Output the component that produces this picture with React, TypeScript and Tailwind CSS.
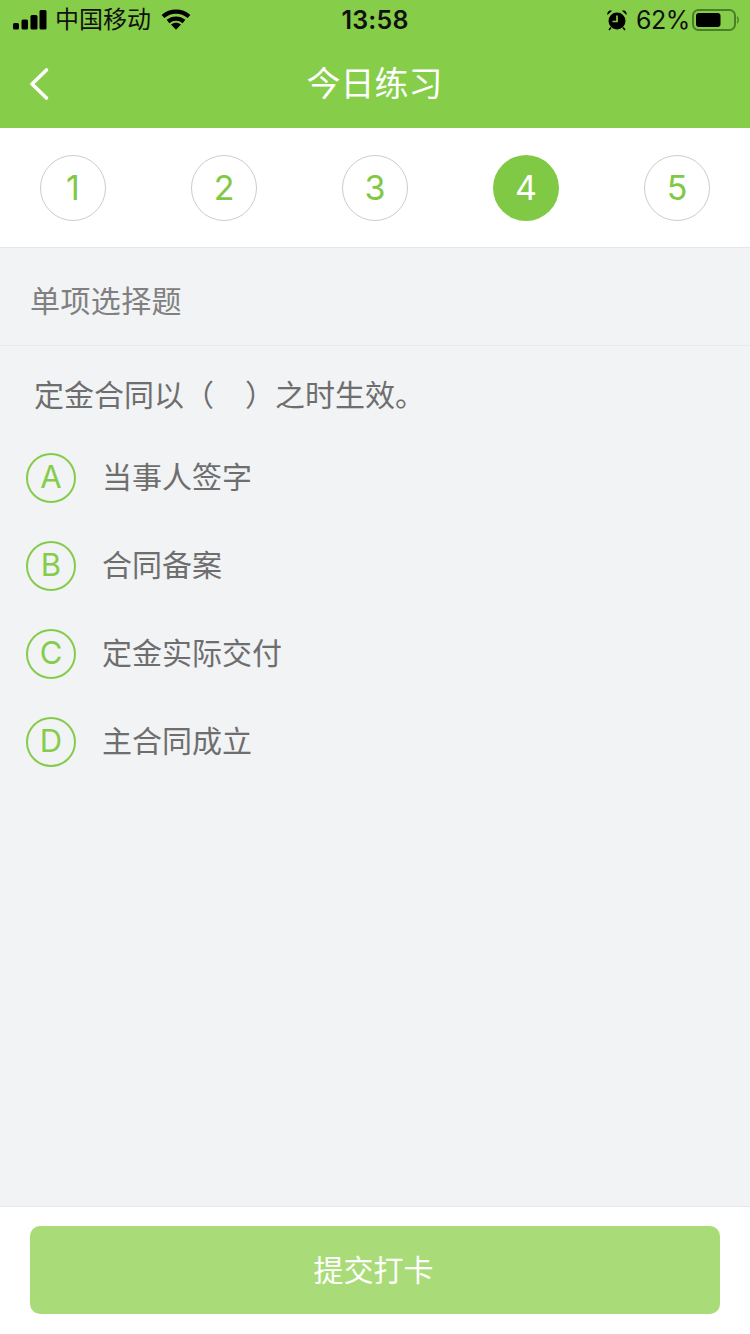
const font = "font-['Liberation_Sans','Noto_Sans_CJK_SC',sans-serif]";

function StatusBar() {
  return (
    <div className="h-10 flex items-center justify-between pl-[13px] pr-[10px] text-black relative">
      <div className="flex items-center">
        <svg width="34" height="20" viewBox="0 0 34 20" fill="#000">
          <rect x="0" y="13" width="6" height="6.500" rx="1.500" />
          <rect x="8.500" y="9.500" width="6.500" height="10" rx="1.500" />
          <rect x="17.500" y="5" width="7" height="14.500" rx="1.500" />
          <rect x="26.500" y="0" width="7" height="19.500" rx="1.500" />
        </svg>
        <span className="ml-2 text-[24px] leading-none text-[#111]">中国移动</span>
        <svg className="ml-[10px]" width="30" height="22" viewBox="0 0 30 22" fill="none" stroke="#000" strokeWidth="4.200">
          <path d="M2 7.500C9.500 .9 20.500 .9 28 7.500" />
          <path d="M7 12.500C11.800 8.600 18.200 8.600 23 12.500" />
          <path d="M10 15.500 15 20.800 20 15.500C17 13.200 13 13.200 10 15.500Z" fill="#000" stroke="none" />
        </svg>
      </div>
      <span className="absolute left-0 right-0 text-center text-[25px] leading-none font-semibold font-['Inter'] text-[#111] tracking-[0.2px] pointer-events-none">13:58</span>
      <div className="flex items-center">
        <svg width="22" height="22" viewBox="0 0 22 22" fill="#000">
          <circle cx="11" cy="12" r="8.500" />
          <path d="M1.500 6 6 1.800C3.600.8 .6 2.800 1.500 6ZM20.500 6 16 1.800C18.400.8 21.400 2.800 20.500 6Z" />
          <path d="M11 6.500V12.500H6.500" fill="none" stroke="#86ce4a" strokeWidth="1.700" />
          <path d="M5 18.500 3 21M17 18.500l2 2.500" stroke="#000" strokeWidth="1.600" />
        </svg>
        <span className="ml-[8px] text-[25px] leading-none font-['Inter'] font-normal text-[#111] tracking-[-0.4px]">62%</span>
        <svg className="ml-[2px]" width="48" height="24" viewBox="0 0 48 24">
          <rect x="1" y="2" width="42" height="20" rx="5.500" fill="none" stroke="#4a7f2a" strokeWidth="2" />
          <rect x="4" y="5" width="24.500" height="14" rx="3" fill="#000" />
          <path d="M45 9c1.600.5 1.600 5.500 0 6" fill="none" stroke="#4a7f2a" strokeWidth="1.400" />
        </svg>
      </div>
    </div>
  );
}

function Step({ n, active }: { n: number; active?: boolean }) {
  return (
    <div
      className={
        active
          ? "w-[66px] h-[66px] rounded-full bg-[#7fc944] text-white flex items-center justify-center text-[34px] font-['Inter'] font-normal"
          : "w-[66px] h-[66px] rounded-full border border-[#cccccc] text-[#7fc944] flex items-center justify-center text-[34px] font-['Inter'] font-normal"
      }
    >
      {n}
    </div>
  );
}

function Option({ letter, text }: { letter: string; text: string }) {
  return (
    <div className="h-[88px] flex items-center pl-[26px] pt-[1px]">
      <div className="w-[50px] h-[50px] rounded-full border-2 border-[#85cc4b] text-[#85cc4b] flex items-center justify-center text-[31px] font-['Inter'] font-normal">
        {letter}
      </div>
      <span className="ml-[26px] text-[30px] text-[#6e6e6e]">{text}</span>
    </div>
  );
}

export default function App() {
  return (
    <div className={`w-[750px] h-[1334px] flex flex-col bg-[#f2f3f5] overflow-hidden ${font}`}>
      <header className="bg-[#86cd4a] h-[128px] shrink-0">
        <StatusBar />
        <div className="h-[88px] relative flex items-center justify-center pr-[1px] text-white text-[34px]">
          <svg className="absolute left-[28px] top-[27px]" width="22" height="34" viewBox="0 0 22 34" fill="none" stroke="#fff" strokeWidth="3.600" strokeLinecap="round" strokeLinejoin="round">
            <path d="M18.500 3 4 17 18.500 31" />
          </svg>
          今日练习
        </div>
      </header>
      <div className="h-[120px] shrink-0 bg-white border-b border-[#e6e6e6] flex items-center justify-between px-[40px]">
        <Step n={1} />
        <Step n={2} />
        <Step n={3} />
        <Step n={4} active />
        <Step n={5} />
      </div>
      <div className="h-[98px] shrink-0 border-b border-[#e9eaec] flex items-center pl-[30px] pt-[9px] text-[30px] tracking-[0.4px] text-[#808080]">
        单项选择题
      </div>
      <div className="h-[88px] shrink-0 -mb-[1px] flex items-center pl-[34px] pt-[10px] text-[30px] text-[#6e6e6e] whitespace-pre">
        定金合同以（<span className="w-[6px]" />   ）之时生效。
      </div>
      <div className="flex-1">
        <Option letter="A" text="当事人签字" />
        <Option letter="B" text="合同备案" />
        <Option letter="C" text="定金实际交付" />
        <Option letter="D" text="主合同成立" />
      </div>
      <footer className="h-[128px] shrink-0 bg-white border-t border-[#e6e7e9] px-[30px] pt-[19px]">
        <div className="h-[88px] rounded-[10px] bg-[#a9dc78] text-white text-[30px] flex items-center justify-center pr-[3px]">
          提交打卡
        </div>
      </footer>
    </div>
  );
}
